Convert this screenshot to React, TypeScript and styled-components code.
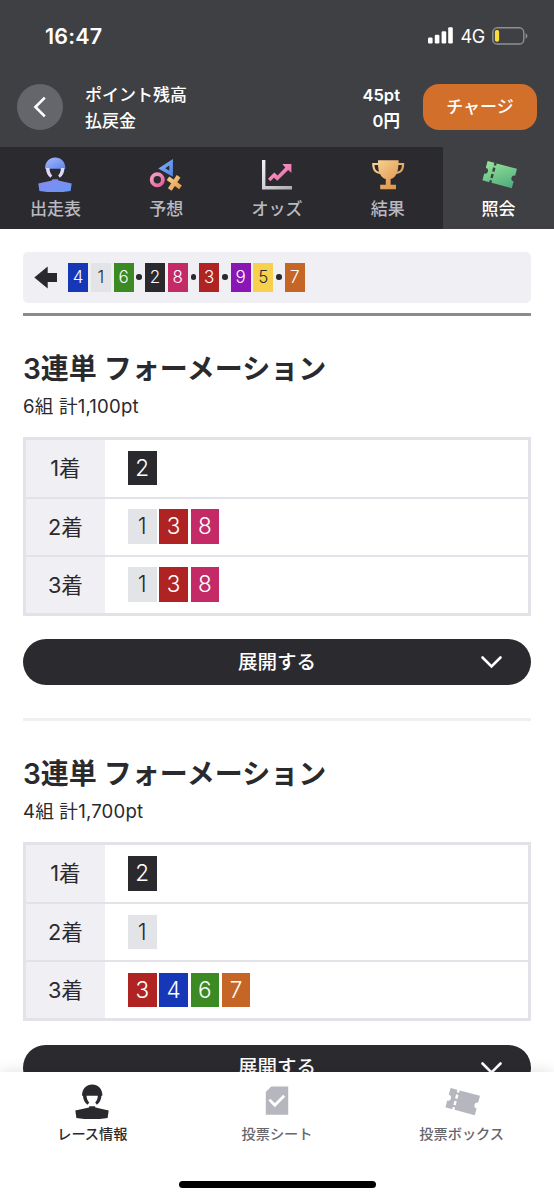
import React from "react";
import styled, { createGlobalStyle } from "styled-components";

const GlobalStyle = createGlobalStyle`
  * { box-sizing: border-box; }
  body {
    margin: 0;
    background: #fff;
    color: #2a2a2e;
    font-family: Inter, "Noto Sans CJK JP", sans-serif;
    -webkit-font-smoothing: antialiased;
  }
`;

const Screen = styled.div`
  display: flex;
  flex-direction: column;
  width: 554px;
  height: 1200px;
  overflow: hidden;
  background: #fff;
  white-space: nowrap;
`;

/* ---------- header ---------- */

const Header = styled.header`
  flex: none;
  height: 147px;
  background: #3f4043;
  color: #fff;
`;

const StatusBar = styled.div`
  display: flex;
  align-items: center;
  height: 71px;
  padding: 0 26px 0 45px;
`;

const Clock = styled.div`
  flex: 1;
  font-size: 21.5px;
  font-weight: 600;
  letter-spacing: 0.2px;
`;

const Network = styled.div`
  margin: 1px 7px 0 8px;
  font-size: 18px;
  letter-spacing: -0.3px;
`;

const AccountBar = styled.div`
  display: flex;
  align-items: center;
  height: 71px;
  padding: 0 17px;
`;

const BackButton = styled.button`
  display: grid;
  place-items: center;
  width: 46px;
  height: 46px;
  padding: 0;
  border: 0;
  border-radius: 50%;
  background: #65666b;
`;

const Balance = styled.dl`
  flex: 1;
  margin: 0 23px 0 22px;
  padding-top: 2px;
  font-size: 17px;
  line-height: 26px;
  font-weight: 500;
`;

const BalanceRow = styled.div`
  display: flex;
  justify-content: space-between;
`;

const BalanceLabel = styled.dt``;

const BalanceValue = styled.dd`
  margin: 0;
  font-size: 16.5px;
  font-weight: 600;
`;

const ChargeButton = styled.button`
  width: 114px;
  height: 46px;
  padding: 1px 0 0;
  border: 0;
  border-radius: 16px;
  background: #d2702b;
  color: #fff;
  font: 500 17px/45px Inter, "Noto Sans CJK JP", sans-serif;
`;

/* ---------- tabs ---------- */

const Tabs = styled.nav`
  display: grid;
  grid-template-columns: repeat(5, 1fr);
  flex: none;
  height: 82px;
  background: #2b2a2e;
`;

const Tab = styled.a<{ $active?: boolean }>`
  display: flex;
  flex-direction: column;
  align-items: center;
  padding-top: 10px;
  background: ${(p) => (p.$active ? "#3f4043" : "transparent")};
  color: ${(p) => (p.$active ? "#fff" : "#b9b9c1")};
  font-size: 17px;
  font-weight: 500;
  line-height: 32px;
`;

/* ---------- content ---------- */

const Content = styled.main`
  flex: 1;
  min-height: 0;
  padding: 22.5px 23px 0;
  overflow: hidden;
`;

const Lineup = styled.div`
  display: flex;
  align-items: center;
  height: 51.5px;
  padding-left: 11px;
  border-radius: 5px;
  background: #f0eff4;
`;

const LineupArrow = styled.svg`
  margin-right: 10.5px;
`;

const LineGroup = styled.div`
  display: flex;
  gap: 2.8px;
`;

const Dot = styled.span`
  width: 5.6px;
  height: 5.6px;
  margin: 0 2.9px;
  border-radius: 50%;
  background: #2a2a2e;
`;

const PALETTE: Record<number, string> = {
  1: "#e3e4e8",
  2: "#2a2a2e",
  3: "#b02323",
  4: "#1537b8",
  5: "#f7d04d",
  6: "#3b8a24",
  7: "#c66626",
  8: "#c42a66",
  9: "#8a17b5",
};

const Badge = styled.span<{ $n: number; $small?: boolean }>`
  width: ${(p) => (p.$small ? 20 : 28.5)}px;
  height: ${(p) => (p.$small ? 28.5 : 34.2)}px;
  background: ${(p) => PALETTE[p.$n]};
  color: ${(p) => (p.$n === 1 || p.$n === 5 ? "#2a2a2e" : "#fff")};
  font-size: ${(p) => (p.$small ? 17 : 22.5)}px;
  font-weight: 350;
  line-height: ${(p) => (p.$small ? 28.5 : 34.2)}px;
  text-align: center;
`;

const Rule = styled.hr`
  height: 2.5px;
  margin: 10px 0 0;
  border: 0;
  background: #8c8b8c;
`;

const Ticket = styled.section`
  & + & {
    margin-top: 33.5px;
    border-top: 3px solid #efeff1;
  }
`;

const TicketTitle = styled.h2`
  margin: 0;
  padding-top: 34px;
  font-size: 28px;
  font-weight: 600;
  line-height: 38px;
`;

const TicketSummary = styled.p`
  margin: 0 0 13px;
  font-size: 18.6px;
  line-height: 36px;
  letter-spacing: 0.18px;
`;

const Places = styled.div`
  border: 3px solid #e3e2e8;
`;

const PlaceRow = styled.div`
  display: flex;
  height: 57px;
  & + & {
    height: 58px;
    border-top: 2px solid #e3e2e8;
  }
`;

const PlaceLabel = styled.div`
  width: 79px;
  background: #f0eff4;
  font-size: 21.7px;
  line-height: 57px;
  text-align: center;
`;

const Picks = styled.div`
  display: flex;
  align-items: center;
  gap: 2.8px;
  padding-left: 23px;
`;

const ExpandButton = styled.button`
  display: flex;
  align-items: center;
  justify-content: center;
  position: relative;
  width: 100%;
  height: 45.5px;
  margin-top: 23.5px;
  padding: 1px 0 0;
  border: 0;
  border-radius: 23px;
  background: #2b2a2e;
  color: #fff;
  font: 500 19.5px/45px Inter, "Noto Sans CJK JP", sans-serif;
`;

const ExpandChevron = styled.svg`
  position: absolute;
  right: 28px;
  top: 16px;
`;

/* ---------- bottom navigation ---------- */

const BottomNav = styled.nav`
  display: flex;
  flex-direction: column;
  flex: none;
  align-items: center;
  position: relative;
  height: 128px;
  background: #fff;
  box-shadow: 0 0 14px rgba(0, 0, 0, 0.13);
`;

const NavItems = styled.div`
  display: grid;
  grid-template-columns: repeat(3, 1fr);
  width: 100%;
  height: 109px;
`;

const NavItem = styled.a<{ $active?: boolean }>`
  display: flex;
  flex-direction: column;
  align-items: center;
  padding-top: 11.5px;
  color: ${(p) => (p.$active ? "#2a2a2e" : "#66666b")};
  font-size: 14.2px;
  font-weight: 500;
  line-height: 27px;
`;

const HomeIndicator = styled.div`
  width: 197px;
  height: 7px;
  border-radius: 4px;
  background: #000;
`;

/* ---------- icons ---------- */

const Gradient = ({ id, from, to }: { id: string; from: string; to: string }) => (
  <defs>
    <linearGradient id={id} x1="0" y1="0" x2="1" y2="1">
      <stop offset="0" stopColor={from} />
      <stop offset="1" stopColor={to} />
    </linearGradient>
  </defs>
);

const Icon = ({ children }: { children: React.ReactNode }) => (
  <svg width="36" height="36" viewBox="0 0 36 36" fill="none">
    {children}
  </svg>
);

const JockeyShape = ({ fill, bodyFill, strap }: { fill: string; bodyFill: string; strap: string }) => (
  <>
    <path d="M8 11.7 C8 4.5 12.4 .5 18.2 .5 S28.4 4.5 28.4 11.7 Z" fill={fill} />
    <path d="M8.9 11 H12.5 C12.6 14.2 13.4 16.6 15.2 18.4 L13.6 20.8 C10.6 18.6 9 15.4 8.9 11 Z M27.5 11 H23.9 C23.8 14.2 23 16.6 21.2 18.4 L22.8 20.8 C25.8 18.6 27.4 15.4 27.5 11 Z" fill={strap} />
    <path d="M1.3 26.4 L15 23.6 L15.4 22.3 H21 L21.4 23.6 L34.7 26.4 L33.6 33.9 Q18 36.3 2.4 33.9 Z" fill={bodyFill} />
  </>
);

const TicketShape = ({ fill }: { fill: string }) => (
  <g transform="translate(6.6 4) rotate(15)" fill={fill}>
    <path d="M0 0 H7 V2.4 H9.4 V0 H30.4 V7 A2.9 2.9 0 0 0 30.4 13 V20 H9.4 V17.7 H7 V20 H0 V13 A2.9 2.9 0 0 0 0 7 Z M7 4.6 V8.8 H9.4 V4.6 Z M7 11.2 V15.4 H9.4 V11.2 Z" fillRule="evenodd" />
  </g>
);

const JockeyIcon = () => (
  <Icon>
    <Gradient id="blue" from="#a9b7fb" to="#5c86ef" />
    <Gradient id="blueBody" from="#8b88f0" to="#6697f5" />
    <JockeyShape fill="url(#blue)" bodyFill="url(#blueBody)" strap="#dcd9fa" />
  </Icon>
);

const MarksIcon = () => (
  <Icon>
    <Gradient id="markBlue" from="#88b5fa" to="#4b83e3" />
    <Gradient id="markPink" from="#f7a0c5" to="#e5609f" />
    <Gradient id="markGold" from="#f7cf8d" to="#e49a4c" />
    <path d="M10.3 11.5 L24.9 2 V19.8 Z M17.3 11.2 L21.3 13.7 V8.6 Z" fill="url(#markBlue)" fillRule="evenodd" />
    <circle cx="9.3" cy="22.7" r="5.6" stroke="url(#markPink)" strokeWidth="3.8" />
    <path d="M20 21.2 L32.5 30.4 M30.6 19.2 L21.8 32.4" stroke="url(#markGold)" strokeWidth="4.5" />
  </Icon>
);

const OddsIcon = () => (
  <Icon>
    <Gradient id="axis" from="#f5f5f7" to="#acabb3" />
    <Gradient id="trend" from="#fbb0d1" to="#e85d9e" />
    <path d="M3 3 H6.4 V29 H33 V32.4 H3 Z" fill="url(#axis)" />
    <path d="M9 21.7 L15.3 15.4 L18.6 18.4 L26.3 10.4 L23.3 7 H32.4 V16 L29.2 13.1 L18.3 23.8 L15 20.7 L11.3 24.2 Z" fill="url(#trend)" />
  </Icon>
);

const TrophyIcon = () => (
  <Icon>
    <Gradient id="gold" from="#fbd69c" to="#d9883b" />
    <path d="M8 3.2 H28.6 V6 H34.2 C34.2 12.5 32.7 16 26.4 17 C25 19.8 22.8 21.6 20.6 22.1 V27.7 H26 V32.3 H10.2 V27.7 H15.8 V22.1 C13.6 21.6 11.4 19.8 10 17 C3.7 16 2.2 12.5 2.2 6 H8 Z M8 8 H4.5 C4.7 12 5.9 14 9.1 14.7 Q8.2 12 8 8 Z M28.4 8 Q28.2 12 27.3 14.7 C30.5 14 31.7 12 31.9 8 Z" fill="url(#gold)" fillRule="evenodd" />
  </Icon>
);

const InquiryIcon = () => (
  <Icon>
    <Gradient id="green" from="#96e596" to="#4daa80" />
    <TicketShape fill="url(#green)" />
  </Icon>
);

const SheetIcon = () => (
  <Icon>
    <path d="M12.2 2.4 H29.2 V30.7 H6.8 V8 Z" fill="#b6b6be" />
    <path d="M10.4 15.6 L15.8 21.2 L25.2 11.8" stroke="#fff" strokeWidth="2.8" />
  </Icon>
);

/* ---------- data ---------- */

const LINEUP = [[4, 1, 6], [2, 8], [3], [9, 5], [7]];

const TICKETS = [
  { summary: "6組 計1,100pt", places: [[2], [1, 3, 8], [1, 3, 8]] },
  { summary: "4組 計1,700pt", places: [[2], [1], [3, 4, 6, 7]] },
];

const TABS = [
  { label: "出走表", icon: <JockeyIcon /> },
  { label: "予想", icon: <MarksIcon /> },
  { label: "オッズ", icon: <OddsIcon /> },
  { label: "結果", icon: <TrophyIcon /> },
  { label: "照会", icon: <InquiryIcon />, active: true },
];

export default function App() {
  return (
    <>
      <GlobalStyle />
      <Screen>
        <Header>
          <StatusBar>
            <Clock>16:47</Clock>
            <svg width="25" height="17" viewBox="0 0 25 17" fill="#fff">
              <rect x="0" y="10.5" width="4.6" height="6" rx="1.2" />
              <rect x="6.8" y="7.8" width="4.6" height="8.7" rx="1.2" />
              <rect x="13.6" y="4.2" width="4.6" height="12.3" rx="1.2" />
              <rect x="20.2" y="0.3" width="4.6" height="16.2" rx="1.2" />
            </svg>
            <Network>4G</Network>
            <svg width="36" height="18" viewBox="0 0 36 18" fill="none">
              <rect x="0.8" y="0.8" width="31" height="16.2" rx="4.6" stroke="#8f9092" strokeWidth="1.4" />
              <rect x="2.9" y="3" width="4.2" height="11.8" rx="1.8" fill="#fbdc3b" />
              <path d="M33.6 6.2 C36 7.2 36 10.6 33.6 11.6 Z" fill="#8f9092" />
            </svg>
          </StatusBar>
          <AccountBar>
            <BackButton aria-label="戻る">
              <svg width="14" height="22" viewBox="0 0 14 22" fill="none" stroke="#fff" strokeWidth="2.6">
                <path d="M11.8 1.6 L2.4 11 L11.8 20.4" />
              </svg>
            </BackButton>
            <Balance>
              <BalanceRow>
                <BalanceLabel>ポイント残高</BalanceLabel>
                <BalanceValue>45pt</BalanceValue>
              </BalanceRow>
              <BalanceRow>
                <BalanceLabel>払戻金</BalanceLabel>
                <BalanceValue>0円</BalanceValue>
              </BalanceRow>
            </Balance>
            <ChargeButton>チャージ</ChargeButton>
          </AccountBar>
        </Header>

        <Tabs>
          {TABS.map((t) => (
            <Tab key={t.label} $active={t.active}>
              {t.icon}
              {t.label}
            </Tab>
          ))}
        </Tabs>

        <Content>
          <Lineup>
            <LineupArrow width="23.5" height="23" viewBox="0 0 23.5 23" fill="#2a2a2e">
              <path d="M0.3 11.5 L13.7 0.4 V7 H23 V16 H13.7 V22.6 Z" />
            </LineupArrow>
            {LINEUP.map((group, i) => (
              <React.Fragment key={i}>
                {i > 0 && <Dot />}
                <LineGroup>
                  {group.map((n) => (
                    <Badge key={n} $n={n} $small>
                      {n}
                    </Badge>
                  ))}
                </LineGroup>
              </React.Fragment>
            ))}
          </Lineup>
          <Rule />

          {TICKETS.map((ticket) => (
            <Ticket key={ticket.summary}>
              <TicketTitle>3連単 フォーメーション</TicketTitle>
              <TicketSummary>{ticket.summary}</TicketSummary>
              <Places>
                {ticket.places.map((picks, i) => (
                  <PlaceRow key={i}>
                    <PlaceLabel>{i + 1}着</PlaceLabel>
                    <Picks>
                      {picks.map((n) => (
                        <Badge key={n} $n={n}>
                          {n}
                        </Badge>
                      ))}
                    </Picks>
                  </PlaceRow>
                ))}
              </Places>
              <ExpandButton>
                展開する
                <ExpandChevron width="23" height="15" viewBox="0 0 23 15" fill="none" stroke="#fff" strokeWidth="2.6" strokeLinecap="round">
                  <path d="M2.5 2.5 L11.5 11.5 L20.5 2.5" />
                </ExpandChevron>
              </ExpandButton>
            </Ticket>
          ))}
        </Content>

        <BottomNav>
          <NavItems>
            <NavItem $active>
              <Icon>
                <JockeyShape fill="#2a2a2e" bodyFill="#2a2a2e" strap="#2a2a2e" />
              </Icon>
              レース情報
            </NavItem>
            <NavItem>
              <SheetIcon />
              投票シート
            </NavItem>
            <NavItem>
              <Icon>
                <TicketShape fill="#b6b6be" />
              </Icon>
              投票ボックス
            </NavItem>
          </NavItems>
          <HomeIndicator />
        </BottomNav>
      </Screen>
    </>
  );
}
